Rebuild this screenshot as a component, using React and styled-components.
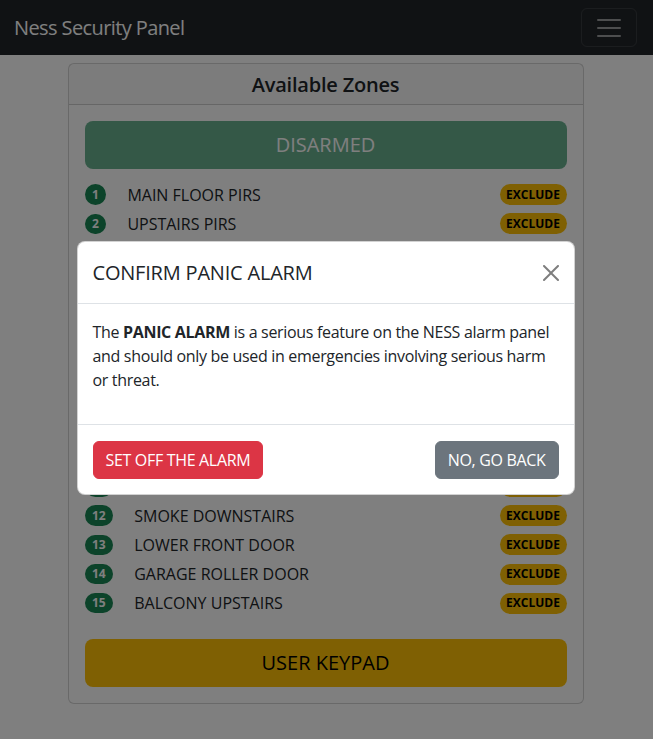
import React from "react";
import styled, { createGlobalStyle } from "styled-components";

const zones = [
    "MAIN FLOOR PIRS",
    "UPSTAIRS PIRS",
    "FAMILY ROOM PIR",
    "KITCHEN PIR",
    "FRONT DOOR",
    "BACK DOOR",
    "LAUNDRY DOOR",
    "STUDY PIR",
    "GARAGE PIR",
    "SIDE GATE",
    "SMOKE UPSTAIRS",
    "SMOKE DOWNSTAIRS",
    "LOWER FRONT DOOR",
    "GARAGE ROLLER DOOR",
    "BALCONY UPSTAIRS",
];

const GlobalStyle = createGlobalStyle`
    html, body {
        margin: 0;
        padding: 0;
        background: #fff;
    }
    body {
        font-family: "Open Sans", "Noto Sans", "Liberation Sans", sans-serif;
        font-size: 16px;
        line-height: 1.5;
        letter-spacing: -0.02em;
        color: #212529;
    }
    * {
        box-sizing: border-box;
    }
`;

const App = () => {
    return (
        <View className="Page">
            <GlobalStyle />
            <Nav>
                <Text className="brand">Ness Security Panel</Text>
                <Toggler>
                    <svg width="30" height="30" viewBox="0 0 30 30">
                        <path
                            d="M4 7h22M4 15h22M4 23h22"
                            stroke="rgba(255,255,255,0.55)"
                            strokeWidth="2"
                            strokeLinecap="round"
                        />
                    </svg>
                </Toggler>
            </Nav>

            <View className="Container">
                <Card>
                    <CardHeader>Available Zones</CardHeader>
                    <CardBody>
                        <BigButton $variant="disarmed" disabled>
                            DISARMED
                        </BigButton>
                        <ZoneList>
                            {zones.map((name, i) => (
                                <ZoneRow key={name}>
                                    <View className="zoneLeft">
                                        <Badge>{i + 1}</Badge>
                                        <Text className="zoneName">{name}</Text>
                                    </View>
                                    <Pill>EXCLUDE</Pill>
                                </ZoneRow>
                            ))}
                        </ZoneList>
                        <BigButton $variant="keypad">USER KEYPAD</BigButton>
                    </CardBody>
                </Card>
            </View>

            <Backdrop />

            <ModalWrap>
                <Modal>
                    <ModalHeader>
                        <Text className="modalTitle">CONFIRM PANIC ALARM</Text>
                        <CloseButton aria-label="Close">
                            <svg width="16" height="16" viewBox="0 0 16 16">
                                <path
                                    d="M.293.293a1 1 0 0 1 1.414 0L8 6.586 14.293.293a1 1 0 1 1 1.414 1.414L9.414 8l6.293 6.293a1 1 0 0 1-1.414 1.414L8 9.414l-6.293 6.293a1 1 0 0 1-1.414-1.414L6.586 8 .293 1.707a1 1 0 0 1 0-1.414z"
                                    fill="#000"
                                />
                            </svg>
                        </CloseButton>
                    </ModalHeader>
                    <ModalBody>
                        <Text className="modalText">
                            The <b>PANIC ALARM</b> is a serious feature on the
                            NESS alarm panel and should only be used in
                            emergencies involving serious harm or threat.
                        </Text>
                    </ModalBody>
                    <ModalFooter>
                        <SmallButton $color="#dc3545">SET OFF THE ALARM</SmallButton>
                        <SmallButton $color="#6c757d">NO, GO BACK</SmallButton>
                    </ModalFooter>
                </Modal>
            </ModalWrap>
        </View>
    );
};

const View = styled.div`
    &.Page {
        position: relative;
        min-height: 739px;
        overflow: hidden;
    }
    &.Container {
        max-width: 540px;
        margin: 0 auto;
        padding: 8px 12px 0;
        transform: translateX(-1px);
    }
    &.zoneLeft {
        display: flex;
        align-items: center;
    }
`;

const Text = styled.p`
    margin: 0;
    padding: 0;
    &.brand {
        font-size: 20px;
        line-height: 30px;
        padding: 5px 0;
        letter-spacing: -0.03em;
        color: #fff;
    }
    &.zoneName {
        margin-left: 21px;
        font-size: 16px;
        font-weight: 500;
        line-height: 24px;
        letter-spacing: 0;
    }
    &.modalTitle {
        font-size: 20px;
        font-weight: 500;
        line-height: 30px;
        letter-spacing: -0.01em;
    }
    &.modalText {
        margin-bottom: 16px;
        line-height: 24px;
    }
`;

const Nav = styled.nav`
    display: flex;
    align-items: center;
    justify-content: space-between;
    height: 55px;
    padding: 0 16px 0 14px;
    background: #212529;
`;

const Toggler = styled.button`
    display: flex;
    align-items: center;
    justify-content: center;
    width: 56px;
    height: 39px;
    padding: 0;
    background: transparent;
    border: 1px solid rgba(255, 255, 255, 0.1);
    border-radius: 6px;
`;

const Card = styled.div`
    display: flex;
    flex-direction: column;
    border: 1px solid rgba(0, 0, 0, 0.175);
    border-radius: 6px;
    background: #fff;
`;

const CardHeader = styled.div`
    padding: 6px 16px 4px;
    font-size: 20px;
    font-weight: 600;
    line-height: 30px;
    letter-spacing: -0.01em;
    text-align: center;
    background: rgba(33, 37, 41, 0.03);
    border-bottom: 1px solid rgba(0, 0, 0, 0.175);
`;

const CardBody = styled.div`
    display: flex;
    flex-direction: column;
    padding: 16px;
`;

const BigButton = styled.button`
    width: 100%;
    height: 48px;
    font-family: inherit;
    font-size: 20px;
    line-height: 30px;
    letter-spacing: 0;
    border-radius: 8px;
    border: 1px solid transparent;
    background: ${(p) => (p.$variant === "disarmed" ? "#198754" : "#ffc107")};
    color: ${(p) => (p.$variant === "disarmed" ? "#fff" : "#000")};
    opacity: ${(p) => (p.$variant === "disarmed" ? 0.65 : 1)};
`;

const ZoneList = styled.div`
    display: flex;
    flex-direction: column;
    margin: 11px 0 21px;
`;

const ZoneRow = styled.div`
    display: flex;
    align-items: center;
    justify-content: space-between;
    height: 29.2px;
`;

const Badge = styled.span`
    display: inline-block;
    padding: 4.5px 7.5px 4px;
    font-size: 12px;
    font-weight: 700;
    line-height: 1;
    letter-spacing: 0;
    color: #fff;
    background: #198754;
    border-radius: 50rem;
`;

const Pill = styled.span`
    display: inline-block;
    width: 67px;
    padding: 4.5px 0;
    font-size: 12px;
    font-weight: 700;
    line-height: 1;
    letter-spacing: 0;
    text-align: center;
    color: #000;
    background: #ffc107;
    border-radius: 50rem;
`;

const Backdrop = styled.div`
    position: absolute;
    inset: 0;
    background: rgba(0, 0, 0, 0.5);
`;

const ModalWrap = styled.div`
    position: absolute;
    inset: 0;
    display: flex;
    align-items: center;
    justify-content: center;
    padding-bottom: 3px;
`;

const Modal = styled.div`
    display: flex;
    flex-direction: column;
    width: 498px;
    background: #fff;
    border: 1px solid rgba(0, 0, 0, 0.175);
    border-radius: 8px;
    transform: translateX(-1px);
`;

const ModalHeader = styled.div`
    display: flex;
    align-items: center;
    justify-content: space-between;
    padding: 16px 15px 15px;
    border-bottom: 1px solid #dee2e6;
`;

const CloseButton = styled.button`
    display: flex;
    padding: 0;
    border: 0;
    background: transparent;
    opacity: 0.5;
`;

const ModalBody = styled.div`
    padding: 16px 15px;
`;

const ModalFooter = styled.div`
    display: flex;
    align-items: center;
    justify-content: space-between;
    padding: 16px 15px 15px;
    border-top: 1px solid #dee2e6;
`;

const SmallButton = styled.button`
    height: 38px;
    padding: 6px 12px;
    font-family: inherit;
    font-size: 16px;
    line-height: 24px;
    letter-spacing: -0.02em;
    color: #fff;
    background: ${(p) => p.$color};
    border: 1px solid ${(p) => p.$color};
    border-radius: 6px;
`;

export default App;
